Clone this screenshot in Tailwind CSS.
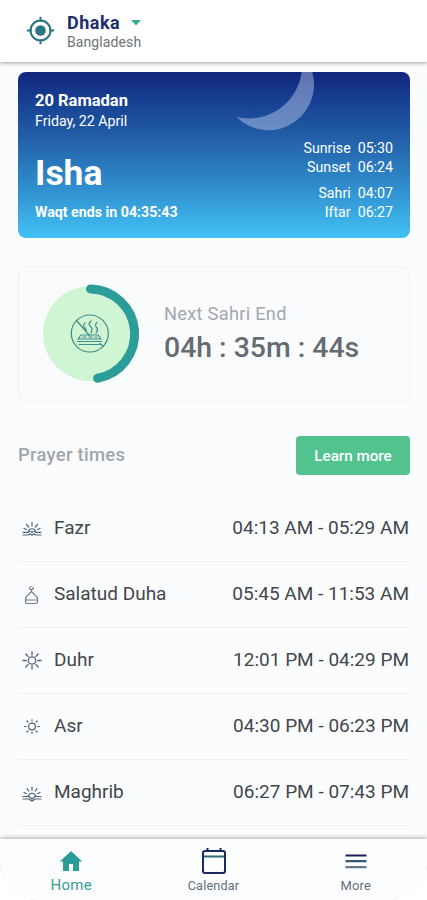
<!DOCTYPE html>
<html lang="en">
<head>
<meta charset="utf-8">
<meta name="viewport" content="width=device-width, initial-scale=1">
<title>Prayer times</title>
<script src="https://cdn.jsdelivr.net/npm/@tailwindcss/browser@4"></script>
</head>
<body class="bg-white">
<div class="flex h-[900px] w-[427px] flex-col overflow-hidden rounded-b-[36px] bg-[#fbfcfe] font-['Roboto',sans-serif]">
  <header class="z-10 flex h-[62px] shrink-0 items-start bg-white pl-[26px] shadow-[0_1px_4px_rgba(0,0,0,0.38)]">
    <svg class="mt-4 size-[29px]" viewBox="0 0 29 29" fill="none" stroke="#2b7584" stroke-width="2"><circle cx="14.5" cy="14.5" r="10"/><circle cx="14.5" cy="14.5" r="5.3" fill="#2b7584" stroke="none"/><path d="M14.5 .8v5M14.5 23.2v5M.8 14.5h5M23.2 14.5h5"/></svg>
    <div class="ml-3 pt-[13px]">
      <div class="flex items-center gap-[11px]">
        <span class="text-[18px] leading-5 font-bold tracking-[0.5px] text-[#1d306c]">Dhaka</span>
        <svg class="h-[6px] w-[10px]" viewBox="0 0 10 6"><path d="M0 0h10L5 5.5z" fill="#36ae8c"/></svg>
      </div>
      <div class="text-[14px] leading-[18px] tracking-[0.1px] text-[#6f7376]">Bangladesh</div>
    </div>
  </header>

  <main class="min-h-0 flex-1 overflow-hidden px-[18px] pt-[10px]">
    <section class="relative flex h-[166px] w-[392px] justify-between overflow-hidden rounded-[8px] bg-linear-to-b from-[#12267f] via-[#235fa9] via-40% to-[#42c1f4] px-[17px] text-white">
      <svg class="absolute inset-0 h-[166px] w-[392px]" viewBox="18 72 392 166"><path d="M236.500 117A45.500 45.500 0 0 0 310 66H302A53 53 0 0 1 236.500 117Z" fill="#b9c9e8" fill-opacity=".48"/></svg>
      <div class="relative pt-[19px]">
        <div class="text-[16.500px] leading-5 font-bold">20 Ramadan</div>
        <div class="text-[14.200px] leading-5">Friday, 22 April</div>
        <div class="mt-[21px] text-[35.500px] leading-[42px] font-bold">Isha</div>
        <div class="mt-[8px] text-[14.200px] leading-5 font-bold">Waqt ends in 04:35:43</div>
      </div>
      <div class="relative grid grid-cols-[auto_auto] gap-x-[7px] self-start pt-[67px] text-right text-[14.200px] leading-[19.400px]">
        <span>Sunrise</span><span>05:30</span>
        <span>Sunset</span><span>06:24</span>
        <span class="mt-[6px]">Sahri</span><span class="mt-[6px]">04:07</span>
        <span>Iftar</span><span>06:27</span>
      </div>
    </section>

    <section class="mt-7 flex h-[136px] w-[392px] items-center rounded-[9px] border border-[#f0f1f3] bg-[#fafbfc] pl-[22px]">
      <svg class="size-[100px] shrink-0" viewBox="0 0 100 100" fill="none">
        <circle cx="49.500" cy="49.500" r="47.500" fill="#cff5d2"/>
        <path d="M48.500 5A45 45 0 0 1 55.500 94.300" stroke="#2d9d9a" stroke-width="9" stroke-linecap="round" transform="translate(1 0)"/>
        <g stroke="#408c89" stroke-width="1.200" stroke-linecap="round" stroke-linejoin="round">
          <circle cx="48.800" cy="49.500" r="18.500"/>
          <path d="M35.500 36.500l13 15M44 39c-2 2-2 3 0 5s1.500 3 1 4M50 37c-3 3-2 4 0 6s1 4 0 6M56 38.500c-3 3-1 4 0 5.500s.5 3-1 5"/>
          <path d="M40 51h17l3 4H37zM38 55h21M36.500 57.500h24M38 60.500h21M42 53h3M48 53h3M54 53h2M59 59.500l3 2.500"/>
        </g>
      </svg>
      <div class="ml-[23px]">
        <div class="text-[18.200px] leading-[26px] tracking-[0.300px] text-[#a3a8ad]">Next Sahri End</div>
        <div class="mt-[2px] text-[28.400px] leading-[38px] font-medium text-[#656b70]">04h : 35m : 44s</div>
      </div>
    </section>

    <div class="mt-[34px] flex h-[39px] w-[392px] items-center justify-between">
      <h2 class="pt-px text-[18.500px] font-medium tracking-[0.250px] text-[#a0a6ac]">Prayer times</h2>
      <button class="h-[39px] w-[114px] rounded-[4px] bg-[#52c38f] pt-px text-[15.200px] font-medium text-white">Learn more</button>
    </div>

    <ul class="mt-[21px] w-[392px] text-[19px] text-[#42474b]">
      <li class="flex h-[66px] items-center border-b border-[#eceef0]">
        <svg class="ml-[4px] h-6 w-5 shrink-0" viewBox="0 0 20 24" fill="none" stroke="#496477" stroke-width="1.200" stroke-linecap="round"><path d="M1 15.300h5l1.500-1M19 15.300h-5l-1.500-1M1 18h5l2-1 2 1 2-1 2 1h5M6.500 14.500a3.600 3.600 0 0 1 7 0M10 5.500v3.500M4.500 7.500l2.200 2.500M15.500 7.500l-2.200 2.500M2 11.500l2.500 1M18 11.500l-2.500 1M9 14.500l1 1 1-1"/></svg>
        <span class="ml-[12px] flex-1">Fazr</span><span class="mr-px">04:13 AM - 05:29 AM</span>
      </li>
      <li class="flex h-[66px] items-center border-b border-[#eceef0]">
        <svg class="ml-[4px] h-6 w-5 shrink-0" viewBox="0 0 20 24" fill="none" stroke="#717b88" stroke-width="1.200" stroke-linecap="round"><path d="M3.500 17h12M5 20.500h9q1.500 0 1.500-1.500v-2.500q0-3-2.500-4.500L9.500 8.500 6 12Q3.500 13.500 3.500 16.500V19q0 1.500 1.500 1.500zM9.500 8.500V6.500M7.500 4.500q0 2 2 2t2-2M9 3.500h1"/></svg>
        <span class="ml-[12px] flex-1">Salatud Duha</span><span class="mr-px">05:45 AM - 11:53 AM</span>
      </li>
      <li class="flex h-[66px] items-center border-b border-[#eceef0]">
        <svg class="ml-[4px] h-6 w-5 shrink-0" viewBox="0 0 20 24" fill="none" stroke="#536276" stroke-width="1.300" stroke-linecap="round"><circle cx="10" cy="11.500" r="3.700"/><path d="M10 3v3M10 17v3M1 11.500h3.200M15.800 11.500H19M3.800 5l2.400 2.600M16.200 5l-2.400 2.600M3.800 18l2.400-2.600M16.200 18l-2.400-2.600"/></svg>
        <span class="ml-[12px] flex-1">Duhr</span><span class="mr-px">12:01 PM - 04:29 PM</span>
      </li>
      <li class="flex h-[66px] items-center border-b border-[#eceef0]">
        <svg class="ml-[4px] h-6 w-5 shrink-0" viewBox="0 0 20 24" fill="none" stroke="#536276" stroke-width="1.200" stroke-linecap="round"><circle cx="10" cy="11.500" r="3.400"/><path d="M10 4.500V6M10 17v1.500M2.500 11.500h1.700M15.800 11.500h1.700M4.800 6L6 7.200M15.200 6L14 7.200M4.800 17L6 15.800M15.200 17L14 15.800"/></svg>
        <span class="ml-[12px] flex-1">Asr</span><span class="mr-px">04:30 PM - 06:23 PM</span>
      </li>
      <li class="flex h-[66px] items-center border-b border-[#eceef0]">
        <svg class="ml-[4px] h-6 w-5 shrink-0" viewBox="0 0 20 24" fill="none" stroke="#4c6073" stroke-width="1.200" stroke-linecap="round"><path d="M1 15.500h6l3 2.500 3-2.500h6M1 18h6l3 2 3-2h6M6.500 15a3.600 3.600 0 0 1 7 0M10 6v3.500M5 7.500l1.800 2.500M15 7.500L13.200 10M2 11.500l2.500 1.200M18 11.500l-2.500 1.200"/></svg>
        <span class="ml-[12px] flex-1">Maghrib</span><span class="mr-px">06:27 PM - 07:43 PM</span>
      </li>
    </ul>
  </main>

  <nav class="z-10 grid h-[61px] shrink-0 grid-cols-3 bg-[#fbfdff] shadow-[0_-1px_5px_rgba(0,0,0,0.32)]">
    <div class="flex flex-col items-center pt-[11px] text-[#3a9d97]">
      <svg class="h-[22px] w-6" viewBox="0 0 24 22"><path d="M12 1L.8 11.500H4V21h6v-7h4v7h6v-9.500h3.200z" fill="#2d9b96"/></svg>
      <span class="mt-[4px] text-[15px] leading-[18px] tracking-[0.300px]">Home</span>
    </div>
    <div class="flex flex-col items-center pt-[8px] text-[#636e7a]">
      <svg class="ml-px size-7" viewBox="0 0 28 28" fill="none" stroke="#1c2860" stroke-width="2"><rect x="3" y="4" width="22" height="22" rx="2"/><path d="M7.500 1v4M20.500 1v4"/><path d="M4 9.500h20" stroke="#316978"/></svg>
      <span class="mt-[2px] text-[12.600px] leading-[18px] tracking-[0.200px]">Calendar</span>
    </div>
    <div class="flex flex-col items-center pt-[8px] text-[#636e7a]">
      <svg class="ml-px size-7" viewBox="0 0 28 28" stroke-width="2.200"><path d="M3.500 8.500h21" stroke="#241b57"/><path d="M3.500 14.200h21" stroke="#315779"/><path d="M3.500 20.200h21" stroke="#61798a"/></svg>
      <span class="mt-[2px] text-[13px] leading-[18px] tracking-[0.200px]">More</span>
    </div>
  </nav>
</div>
</body>
</html>
